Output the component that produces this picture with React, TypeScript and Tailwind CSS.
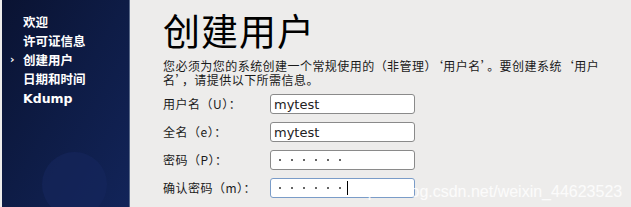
const navItems = ["欢迎", "许可证信息", "创建用户", "日期和时间", "Kdump"];

const fields = [
  { label: "用户名（U）：", value: "mytest", password: false },
  { label: "全名（e）：", value: "mytest", password: false },
  { label: "密码（P）：", value: "", password: true },
  { label: "确认密码（m）：", value: "", password: true, focused: true },
];

const cjk = { fontFamily: '"DejaVu Sans", "Noto Sans CJK SC", sans-serif' };
const zh = { fontFamily: '"Noto Sans CJK SC", sans-serif' };

export default function App() {
  return (
    <div className="relative flex h-[207px] w-[631px] overflow-hidden bg-[#edeceb]" style={cjk}>
      <aside className="relative ml-[2px] w-[128px] shrink-0 overflow-hidden border-r border-[#5a6a8a] bg-gradient-to-br from-[#0a1332] via-[#0e1c46] to-[#122459] pt-[16px]">
        <div className="absolute left-[40px] top-[152px] h-[65px] w-[65px] rounded-full bg-[#15275e] opacity-60" />
        <ul className="relative flex flex-col gap-[4px]">
          {navItems.map((item) => (
            <li key={item} className="relative flex h-[15px] items-center pl-[21px] text-[12.5px] font-bold leading-none text-white">
              {item === "创建用户" && (
                <span className="absolute left-[8px] top-[0px] text-[11px]">›</span>
              )}
              {item}
            </li>
          ))}
        </ul>
      </aside>

      <main className="flex flex-1 flex-col pl-[33px] pt-[9px]">
        <h1 className="text-[37px] leading-[42px] tracking-[1px] text-black" style={zh}>
          创建用户
        </h1>
        <p className="mt-[8px] text-[12px] leading-[14px] tracking-[0.45px] text-[#1a1a1a]" style={zh}>
          您必须为您的系统创建一个常规使用的（非管理）‘用户名’。要创建系统‘用户
          <br />
          名’，请提供以下所需信息。
        </p>
        <div className="mt-[7px] flex flex-col gap-[8px]">
          {fields.map((f) => (
            <div key={f.label} className="flex items-center">
              <label className="w-[107px] text-[12px] tracking-[0.5px] text-[#1a1a1a]" style={zh}>
                {f.label}
              </label>
              <div
                className={
                  f.focused
                    ? "flex h-[20px] w-[145px] items-center rounded-[3px] border border-[#7a9cc8] bg-white px-[3px]"
                    : "flex h-[20px] w-[145px] items-center rounded-[3px] border border-[#8a8a8a] bg-white px-[3px]"
                }
              >
                {f.password ? (
                  <span className="flex items-center gap-[10px] pl-[5px]">
                    {[0, 1, 2, 3, 4, 5].map((i) => (
                      <span key={i} className="h-[2px] w-[2px] rounded-full bg-[#333]" />
                    ))}
                    {f.focused && <span className="ml-[-4px] h-[14px] w-[1px] bg-black" />}
                  </span>
                ) : (
                  <span className="text-[13px] leading-none text-[#222]">{f.value}</span>
                )}
              </div>
            </div>
          ))}
        </div>
      </main>

      <div className="pointer-events-none absolute left-[350px] top-[180px] text-[16px] text-white/80" style={{ fontFamily: '"Liberation Sans", sans-serif' }}>
        https://blog.csdn.net/weixin_44623523
      </div>
    </div>
  );
}
